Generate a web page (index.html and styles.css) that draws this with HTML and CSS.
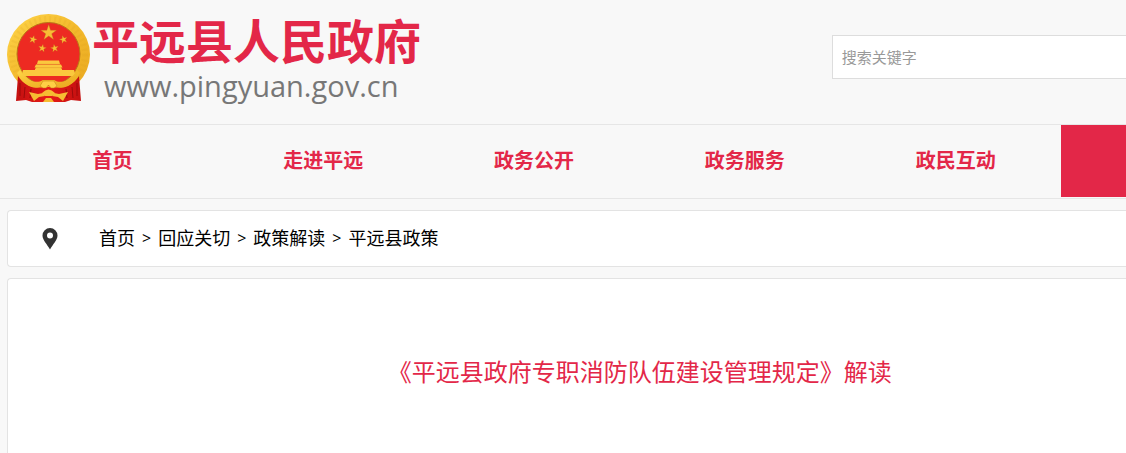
FILE: index.html
```html
<!DOCTYPE html>
<html lang="zh-CN">
<head>
    <meta charset="UTF-8">
    <meta name="viewport" content="width=device-width, initial-scale=1.0">
    <title>《平远县政府专职消防队伍建设管理规定》解读</title>
    <link rel="stylesheet" href="styles.css">
</head>
<body>
    <header class="site-header">
        <div class="brand">
            <svg class="emblem" viewBox="0 0 83 89" aria-hidden="true">
                <defs>
                    <linearGradient id="gold" x1="0" y1="0" x2="1" y2="1">
                        <stop offset="0" stop-color="#ffd64a"/>
                        <stop offset="0.5" stop-color="#f3b92c"/>
                        <stop offset="1" stop-color="#e9a71f"/>
                    </linearGradient>
                    <linearGradient id="drape" x1="0" y1="0" x2="1" y2="0">
                        <stop offset="0" stop-color="#c41010"/>
                        <stop offset="0.5" stop-color="#e71c18"/>
                        <stop offset="1" stop-color="#c41010"/>
                    </linearGradient>
                    <path id="star" d="M0-10 2.3-3.1 9.5-3.1 3.7 1.2 5.9 8.1 0 3.8-5.9 8.1-3.7 1.2-9.5-3.1-2.3-3.1Z"/>
                </defs>
                <!-- wreath -->
                <ellipse cx="41.5" cy="40.5" rx="41.5" ry="40.5" fill="url(#gold)"/>
                <ellipse cx="41.5" cy="40.5" rx="36.5" ry="35.5" fill="none" stroke="#d9971c" stroke-width="6" stroke-dasharray="2 3" opacity="0.15"/>
                <circle cx="41.5" cy="40" r="31.5" fill="#ed2a22" stroke="#b97816"/>
                <!-- stars -->
                <g fill="#f8bd35" stroke="#b8701f" stroke-width="0.4">
                    <use href="#star" transform="translate(41.7 18.8) scale(.82)"/>
                    <use href="#star" transform="translate(26 25.5) rotate(15) scale(.42)"/>
                    <use href="#star" transform="translate(56.5 25.5) rotate(-15) scale(.42)"/>
                    <use href="#star" transform="translate(35.3 34.3) rotate(10) scale(.42)"/>
                    <use href="#star" transform="translate(47.6 34.3) rotate(-10) scale(.42)"/>
                </g>
                <!-- gate -->
                <g fill="#fbc83e">
                    <path d="M31 46.5h21l1 3.5H30ZM29 50.5h25l1.500 3h-28ZM29 53.500h25V57H29Z"/>
                    <path d="M16 56h12v-1.500h27V56h12l1.500 6H15Z"/>
                </g>
                <path d="M30 50.300h23M28 53.600h27" stroke="#e09a28" stroke-width="0.5"/>
                <!-- drapes -->
                <path d="M11 62C17 72 28 75 41.500 73C55 75 66 72 72 62L74 87 64 86 58 88 48 88H35L25 88 19 86 9 87Z" fill="url(#drape)"/>
                <path d="M13 69v13M18 73l-1 11M24 75l-1 9M70 69v13M65 73l1 11M59 75l1 9" stroke="#9b0b0b" fill="none"/>
                <path d="M10 59C17 73 29 77 37 71l4.500-2 4.500 2C54 77 66 73 73 59l-3-3C63 68 53 70 47 66h-11C30 70 20 68 13 56Z" fill="url(#gold)"/>
                <!-- gear and ribbons -->
                <path d="M33 72l3-5h11l3 5-3 2h-3l-2.500-3-2.500 3h-3Z" fill="#ffcf45" stroke="#c27b17" stroke-width="0.5"/>
                <path d="M22 78l9 2 5-1 2 3-6 1-5 4ZM61 78l-9 2-5-1-2 3 6 1 5 4Z" fill="#f6bd32"/>
                <path d="M35 79q6.500-7 13 0l-3 3h-7ZM36 88l3-4h5l3 4Z" fill="#f6bd32"/>
            </svg>
            <div class="brand-text">
                <h1>平远县人民政府</h1>
                <p>www.pingyuan.gov.cn</p>
            </div>
        </div>
        <form class="search">
            <input type="text" placeholder="搜索关键字" aria-label="搜索关键字">
        </form>
    </header>

    <nav class="main-nav">
        <ul>
            <li><a href="#">首页</a></li>
            <li><a href="#">走进平远</a></li>
            <li><a href="#">政务公开</a></li>
            <li><a href="#">政务服务</a></li>
            <li><a href="#">政民互动</a></li>
            <li class="active"></li>
        </ul>
    </nav>

    <main>
        <div class="panel breadcrumb">
            <svg class="pin" viewBox="0 0 16 22" aria-hidden="true">
                <path fill="#333" fill-rule="evenodd" d="M8 0a7.500 7.500 0 0 1 7.500 7.500C15.500 12 11 16 8 21.500 5 16 .5 12 .5 7.500A7.500 7.500 0 0 1 8 0Zm0 4.500a3 3 0 1 0 0 6 3 3 0 0 0 0-6Z"/>
            </svg>
            <a href="#">首页</a>
            <span>&gt;</span>
            <a href="#">回应关切</a>
            <span>&gt;</span>
            <a href="#">政策解读</a>
            <span>&gt;</span>
            <a href="#">平远县政策</a>
        </div>

        <article class="panel article">
            <h2>《平远县政府专职消防队伍建设管理规定》解读</h2>
        </article>
    </main>
</body>
</html>
```
FILE: styles.css
```css
* {
    box-sizing: border-box;
}

body {
    margin: 0;
    min-height: 100vh;
    display: flex;
    flex-direction: column;
    font-family: "Open Sans", "Noto Sans CJK SC", sans-serif;
    background-color: #f8f8f8;
    color: #000;
}

a {
    color: inherit;
    text-decoration: none;
}

/* Header */
.site-header {
    display: flex;
    justify-content: space-between;
    align-items: flex-start;
    padding: 14px 0 20px 7px;
}

.brand {
    display: flex;
}

.emblem {
    width: 83px;
    height: 89px;
}

.brand-text {
    padding-left: 2px;
}

.brand-text h1 {
    margin: 0;
    font-size: 47px;
    line-height: 54px;
    font-weight: bold;
    color: #e32748;
}

.brand-text p {
    margin: 0;
    padding-left: 12px;
    font-size: 29px;
    line-height: 36px;
    color: #777;
}

.search {
    width: 26.3%;
    padding-top: 21px;
}

.search input {
    display: block;
    width: 100%;
    height: 44px;
    padding: 0 9px;
    border: 1px solid #ddd;
    border-right: none;
    border-radius: 0;
    background-color: #fff;
    font-family: inherit;
    font-size: 15px;
    outline: none;
}

.search input::placeholder {
    color: #999;
}

/* Navigation */
.main-nav {
    padding-left: 7px;
    border-top: 1px solid #e6e6e6;
    border-bottom: 1px solid #e6e6e6;
}

.main-nav ul {
    display: grid;
    grid-template-columns: repeat(5, 211fr) 65fr;
    margin: 0;
    padding: 0 0 1px;
    list-style: none;
}

.main-nav a {
    display: block;
    line-height: 72px;
    text-align: center;
    font-size: 20px;
    font-weight: bold;
    color: #e32748;
}

.main-nav .active {
    background-color: #e32748;
}

/* Content */
main {
    flex: 1;
    display: flex;
    flex-direction: column;
    gap: 11px;
    padding: 11px 0 0 7px;
}

.panel {
    background-color: #fff;
    border: 1px solid #e3e3e3;
    border-right: none;
    border-radius: 4px 0 0 4px;
}

.breadcrumb {
    display: flex;
    align-items: center;
    gap: 7px;
    padding: 14px 34px;
    font-size: 18px;
    line-height: 27px;
}

.breadcrumb span {
    font-size: 16px;
}

.pin {
    width: 16px;
    height: 22px;
    margin-right: 34px;
}

.article {
    flex: 1;
    padding: 75px 0 48px 13%;
    border-bottom: none;
    border-radius: 4px 0 0 0;
}

.article h2 {
    margin: 0;
    text-align: center;
    font-size: 24px;
    line-height: 36px;
    font-weight: normal;
    color: #e32748;
}
```
